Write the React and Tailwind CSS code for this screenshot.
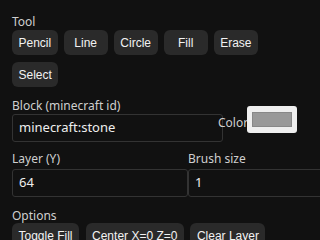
import React, { useState } from "react";

const tools = ["Pencil", "Line", "Circle", "Fill", "Erase", "Select"];
const options = ["Toggle Fill", "Center X=0 Z=0", "Clear Layer"];

const labelFont = { fontFamily: '"Noto Sans", sans-serif' };
const btnFont = { fontFamily: '"Liberation Sans", Arial, sans-serif' };

const Btn = ({ children }) => (
  <button
    type="button"
    className="h-[25px] min-w-[44px] px-[6.5px] rounded-[6px] bg-[#2a2a2a] text-[12px] text-[#f2f2f2] leading-none"
    style={btnFont}
  >
    {children}
  </button>
);

const Label = ({ children }) => (
  <div className="text-[12px] leading-[14px] text-[#cfcfcf]" style={labelFont}>
    {children}
  </div>
);

const Field = ({ value }) => (
  <div
    className="h-[28px] border border-[#333] rounded-[3px] flex items-center px-[6px] text-[13px] text-[#eeeeee]"
    style={labelFont}
  >
    {value}
  </div>
);

export default function App() {
  const [tool] = useState("Pencil");

  return (
    <div className="w-[320px] h-[240px] overflow-hidden bg-[#111111] px-[12px] pt-[15px]">
      {/* tool */}
      <Label>Tool</Label>
      <div className="w-[260px] flex flex-wrap gap-x-[6px] gap-y-[7px] mt-[1px]">
        {tools.map((t) => (
          <Btn key={t}>{t}</Btn>
        ))}
      </div>

      {/* block + colour */}
      <div className="flex items-center mt-[12px]">
        <div className="w-[206px] flex flex-col gap-[1px]">
          <Label>Block (minecraft id)</Label>
          <div className="w-[211px]">
            <Field value="minecraft:stone" />
          </div>
        </div>
        <div className="text-[12px] text-[#cfcfcf] mt-[4px]" style={labelFont}>
          Color
        </div>
        <div className="-ml-[1px] w-[50px] h-[27px] bg-[#efefef] rounded-[3px] py-[6px] px-[5px] -mt-[3px]">
          <div className="w-full h-full bg-[#999999] border border-[#888]" />
        </div>
      </div>

      {/* layer + brush */}
      <div className="grid grid-cols-[176px_176px] mt-[10px]">
        <div className="flex flex-col gap-[3px]">
          <Label>Layer (Y)</Label>
          <Field value="64" />
        </div>
        <div className="flex flex-col gap-[3px]">
          <Label>Brush size</Label>
          <Field value="1" />
        </div>
      </div>

      {/* options */}
      <div className="mt-[12px]">
        <Label>Options</Label>
        <div className="flex gap-[6.5px]">
          {options.map((o) => (
            <Btn key={o}>{o}</Btn>
          ))}
        </div>
      </div>
    </div>
  );
}
